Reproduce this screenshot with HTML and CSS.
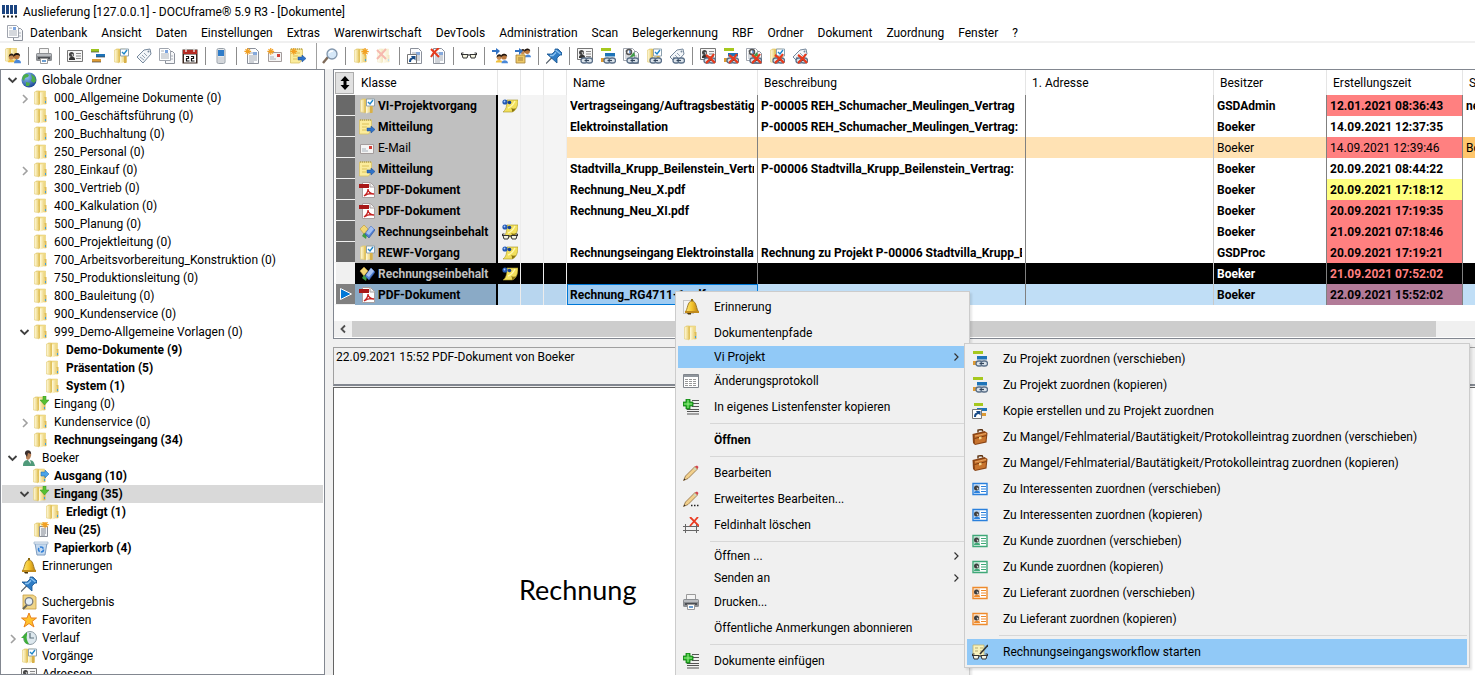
FILE: index.html
```
<!DOCTYPE html>
<html lang="de">
<head>
    <meta charset="UTF-8">
    <meta name="viewport" content="width=device-width, initial-scale=1.0">
    <title>DOCUframe - Dokumente</title>
    <link rel="stylesheet" href="styles.css">
</head>
<body>
    <!-- icon set, 16x16 -->
    <svg class="sprite" aria-hidden="true">
        <defs>
            <linearGradient id="g-fold" x1="0" x2="1" y1="0" y2="0"><stop offset="0" stop-color="#fffbe0"/><stop offset="1" stop-color="#ecd277"/></linearGradient>
            <linearGradient id="g-gold" x1="0" x2="1" y1="0" y2="0"><stop offset="0" stop-color="#fff08a"/><stop offset=".5" stop-color="#f4c42c"/><stop offset="1" stop-color="#b87a10"/></linearGradient>
            <radialGradient id="g-globe" cx="0.35" cy="0.3" r="0.8"><stop offset="0" stop-color="#8fc4f5"/><stop offset="1" stop-color="#123c8c"/></radialGradient>
        </defs>
        <symbol id="i-folder" viewBox="0 0 16 16"><path d="M3 1h9.500v7H3z" fill="#f3e08f" stroke="#e0c765" stroke-width=".5"/><path d="M1.500 2l4-1v13.500l-4-.5z" fill="url(#g-fold)" stroke="#e3cb70" stroke-width=".6"/><path d="M5.500 1.500L7 1v13l-1.500 1.500z" fill="#e2c25c"/><path d="M7 2.500l4.500-.5v12L7 15.500z" fill="url(#g-fold)"/><path d="M11.500 7h2v7l-2 .5z" fill="#e0bd55"/><path d="M12.500 11v2" stroke="#3aa0e0"/></symbol>
        <symbol id="i-vorgang" viewBox="0 0 16 16"><use href="#i-folder"/><path d="M7.500 1h8v7h-8z" fill="#fff" stroke="#8da0ae"/><path d="M9 4l2 2 3-4" fill="none" stroke="#1f86c8" stroke-width="1.400"/><path d="M11 8h2.500v7H11z" fill="#d8b048"/></symbol>
        <symbol id="i-folderin" viewBox="0 0 16 16"><use href="#i-folder" x="-1"/><path d="M10 0h3v4h3l-4.500 5L7 4h3z" fill="#55c032" stroke="#35901c" stroke-width=".5"/></symbol>
        <symbol id="i-folderout" viewBox="0 0 16 16"><use href="#i-folder" x="-1"/><path d="M8 4h4V2l4 4-4 4V8H8z" fill="#4aa3e8" stroke="#1a64ac" stroke-width=".5"/></symbol>
        <symbol id="i-spark" viewBox="0 0 16 16"><path d="M5 0v9M.5 4.500h9M2 1.500l6 6M8 1.500l-6 6" stroke="#f2a022" stroke-width="1.600"/></symbol>
        <symbol id="i-neu" viewBox="0 0 16 16"><use href="#i-folder"/><path d="M6.500 4.500h8v10h-8z" fill="#f4f6f8" stroke="#8a8f98"/><path d="M8 7h5M8 9h5M8 11h5M8 13h4" stroke="#808690"/><use href="#i-spark" x="8" y="-1" width="13" height="13"/></symbol>
        <symbol id="i-globe" viewBox="0 0 16 16"><circle cx="8" cy="8" r="7.500" fill="url(#g-globe)"/><path d="M2 4c2-3 5-2 6-1l-1 2-3 1-1 3-2-2zM10 2l4 3 1 4-2 2-3-2 1-3zM5 10l4 1-1 3-3 0z" fill="#4cae4a"/></symbol>
        <symbol id="i-person" viewBox="0 0 16 16"><path d="M2 16c0-5 2-6 6-6s5 2 6 6z" fill="#4f9a7a"/><path d="M6 9h3l1 5z" fill="#f4f4f4"/><path d="M5 2c3-2 6 0 5 4-1 4-4 5-5 2z" fill="#b98258"/><path d="M4 4c-1-5 7-5 6 0l-3-1-1 4z" fill="#3b2f2c"/></symbol>
        <symbol id="i-trash" viewBox="0 0 16 16"><path d="M2 3h12l-2 12H4z" fill="#c5d9ee" stroke="#7d9cc0"/><path d="M1 2h14v2H1z" fill="#e8f0f8" stroke="#8aa4c0" stroke-width=".6"/><circle cx="8" cy="9.500" r="2.500" fill="none" stroke="#2f7fd8" stroke-width="1.600" stroke-dasharray="4 1.200"/></symbol>
        <symbol id="i-bell" viewBox="0 0 16 16"><path d="M7 0h2v2H7z" fill="#8a6a10"/><path d="M1 13c3-2 2-11 7-11s4 9 7 11z" fill="url(#g-gold)" stroke="#8b6610" stroke-width=".8"/><path d="M1 12h14v2H1z" fill="#c08a1c"/><path d="M3 14h4v1.500H4z" fill="#4a3508"/></symbol>
        <symbol id="i-pin" viewBox="0 0 16 16"><path d="M0 15.500l6-6" stroke="#56616c" stroke-width="1.200"/><path d="M1 6h5l3-3 0-2 3 0 4 4 0 2-2 0-3 3 0 5z" fill="#2f7cc4" stroke="#15528e" stroke-width=".8"/><path d="M9.500 2l5 4M4 7.500l3 0 3-3" stroke="#8cc4f2" stroke-width="1.300" fill="none"/></symbol>
        <symbol id="i-magnifier" viewBox="0 0 16 16"><path d="M1 15l5-6" stroke="#7e6a58" stroke-width="2.400"/><circle cx="10" cy="6" r="5" fill="#d6e8f8" stroke="#8296ac" stroke-width="1.300"/><path d="M7 5c1-2 3-2 4-2" stroke="#fff" stroke-width="1.400" fill="none"/></symbol>
        <symbol id="i-search" viewBox="0 0 16 16"><path d="M2 1h10l3 2v12H2z" fill="#f0d588" stroke="#c59c40" stroke-width=".8"/><path d="M2 15l4-4" stroke="#665" stroke-width="2"/><circle cx="8" cy="7.500" r="3.800" fill="#e4eef6" stroke="#777c84" stroke-width="1.300"/></symbol>
        <symbol id="i-star" viewBox="0 0 16 16"><path d="M8 1l2 5h5.500l-4.500 3.500 2 5.500-5-3.500L3 15l2-5.500L.5 6H6z" fill="#ffc32e" stroke="#e8801c"/></symbol>
        <symbol id="i-history" viewBox="0 0 16 16"><circle cx="9" cy="8" r="6.500" fill="#dde8ee" stroke="#8d9ba4"/><path d="M9 3v5h4" stroke="#5e707c" fill="none" stroke-width="1.200"/><path d="M0 8l6-6v3c-1 3 0 6 2 9-4 0-5-2-5-6z" fill="#3fae3a"/></symbol>
        <symbol id="i-card" viewBox="0 0 16 16"><path d="M.5 2.500h15v11H.5z" fill="#f6f6f6" stroke="#777"/><path d="M9 5.500h5M9 8h5M9 10.500h5" stroke="#888"/><path d="M2 11c0-3 6-3 6 0v1H2z" fill="#333"/><circle cx="4.500" cy="6.500" r="2.500" fill="#444"/><path d="M4.500 6l2 .5-1 2z" fill="#ddd"/></symbol>
        <symbol id="i-idcard" viewBox="0 0 16 16"><path d="M1 2.500h14v11H1z" fill="#fff" stroke="currentColor" stroke-width="1.400"/><path d="M2 3.500h6v9H2z" fill="currentColor" opacity=".35"/><path d="M9 5.500h5M9 8h5M9 10.500h5" stroke="currentColor"/><path d="M2 12c0-3 6-3 6 0z" fill="currentColor"/><circle cx="4.500" cy="7" r="2.500" fill="#3c3c3c"/><path d="M4.500 6.500l2 .5-1 2z" fill="#ddd"/></symbol>
        <symbol id="i-bars" viewBox="0 0 16 16"><path d="M1 1h8v3H1z" fill="#9cc41e"/><path d="M6 6h9v3H6z" fill="#1d73b8"/><path d="M2 11h9v3H2z" fill="#dc9a34"/><path d="M1 4h8M6 9h9M2 14h9" stroke="#444" stroke-width=".7"/></symbol>
        <symbol id="i-chain" viewBox="0 0 16 16"><rect x="4" y="10" width="6.500" height="5" rx="2.500" fill="#d9e2ea" stroke="#5a6f88" stroke-width="1.300"/><rect x="9" y="10" width="6.500" height="5" rx="2.500" fill="#d9e2ea" stroke="#5a6f88" stroke-width="1.300"/><path d="M7.500 12.500h4.500" stroke="#34465c" stroke-width="1.200"/></symbol>
        <symbol id="i-cross" viewBox="0 0 16 16"><path d="M6 7c3 2 6 4 9 8M14 6c-2 3-4 6-8 9" stroke="#e63a1c" stroke-width="2.200" fill="none"/></symbol>
        <symbol id="i-barslink" viewBox="0 0 16 16"><path d="M1 0h10v3H1z" fill="#a6c81e"/><path d="M5 5h10v3.500H5z" fill="#1d73b8"/><path d="M1 10h4v4H1z" fill="#dc9a34"/><use href="#i-chain"/></symbol>
        <symbol id="i-barsx" viewBox="0 0 16 16"><use href="#i-barslink"/><use href="#i-cross"/></symbol>
        <symbol id="i-arrowbox" viewBox="0 0 16 16"><path d="M.5 6.500h9v9h-9z" fill="#fff" stroke="#777"/><path d="M2 14c0-3 1-4 3-4.500L4 8h4.500v4.500L7 11c-2 0-3 1-3 3z" fill="#174a86"/></symbol>
        <symbol id="i-barscopy" viewBox="0 0 16 16"><path d="M2 0h9v3H2z" fill="#a6c81e"/><path d="M5 5h10v3H5z" fill="#1d73b8"/><path d="M8 10h6v3H8z" fill="#dc9a34"/><use href="#i-arrowbox"/></symbol>
        <symbol id="i-doc" viewBox="0 0 16 16"><path d="M3.500.5h8l3 3v12h-11z" fill="#fbfcfe" stroke="#8b909a"/><path d="M5 5h4M5 8h8M5 10h8M5 12h8M5 14h5" stroke="#a3a9b2"/><path d="M9 4h4v3H9z" fill="#86a9dc"/></symbol>
        <symbol id="i-docs" viewBox="0 0 16 16"><path d="M6.500 3.500h7l2 2v10h-9z" fill="#f6f7f9" stroke="#8b909a"/><path d="M.5.500h9l2 2v10h-11z" fill="#fff" stroke="#a0a5ae"/><path d="M2 3h3M2 6h8M2 8h8M2 10h8M12 8h2M12 11h2" stroke="#aab0b9"/><path d="M6 2h3v3H6z" fill="#7ba4e0"/></symbol>
        <symbol id="i-docx" viewBox="0 0 16 16"><use href="#i-doc"/><path d="M1 1l8 8M9 0C6 2 3 5 1 9" stroke="#e63a1c" stroke-width="2"/></symbol>
        <symbol id="i-newdoc" viewBox="0 0 16 16"><use href="#i-doc"/><use href="#i-spark" width="12" height="12"/></symbol>
        <symbol id="i-shortcut" viewBox="0 0 16 16"><use href="#i-doc"/><use href="#i-arrowbox"/></symbol>
        <symbol id="i-doclink" viewBox="0 0 16 16"><use href="#i-docs"/><circle cx="6" cy="4" r="2.500" fill="none" stroke="#555" stroke-width="1.500"/><path d="M6 10l5-6 1 4z" fill="#3f9e44"/><use href="#i-chain"/></symbol>
        <symbol id="i-doclinkx" viewBox="0 0 16 16"><use href="#i-doclink"/><use href="#i-cross"/></symbol>
        <symbol id="i-cardlink" viewBox="0 0 16 16"><use href="#i-card" y="-2"/><use href="#i-chain"/></symbol>
        <symbol id="i-cardx" viewBox="0 0 16 16"><use href="#i-cardlink"/><use href="#i-cross"/></symbol>
        <symbol id="i-vorganglink" viewBox="0 0 16 16"><use href="#i-vorgang"/><use href="#i-chain"/></symbol>
        <symbol id="i-vorgangx" viewBox="0 0 16 16"><use href="#i-vorganglink"/><use href="#i-cross"/></symbol>
        <symbol id="i-tag" viewBox="0 0 16 16"><path d="M1 9l7-7 6-1 1 5-8 9z" fill="#f3f6f9" stroke="#76889c"/><circle cx="12.500" cy="3.500" r="1" fill="#76889c"/><path d="M4 9l4 3M6 7l3 3M8 5l3 3" stroke="#93a2b2"/></symbol>
        <symbol id="i-taglink" viewBox="0 0 16 16"><use href="#i-tag"/><use href="#i-chain"/></symbol>
        <symbol id="i-tagx" viewBox="0 0 16 16"><use href="#i-taglink"/><use href="#i-cross"/></symbol>
        <symbol id="i-print" viewBox="0 0 16 16"><path d="M3.500 .5h9v6h-9z" fill="#f4f4f4" stroke="#9a9a9a"/><rect x="0" y="5" width="16" height="8" rx="1.500" fill="#8b8e92"/><path d="M1 6h14v2H1z" fill="#b9bcc0"/><path d="M2 9h12v2H2z" fill="#4c4f54"/><path d="M4.500 10.500h7v5h-7z" fill="#fff" stroke="#9a9a9a"/><path d="M6 13h4" stroke="#3a7cc0" stroke-width="1.500"/></symbol>
        <symbol id="i-calendar" viewBox="0 0 16 16"><path d="M.5 1.500h15v14H.5z" fill="#3b2820"/><path d="M1 2h14v4H1z" fill="#b42a22"/><path d="M2 6.500h12v8H2z" fill="#fff"/><path d="M4 0v4M12 0v4" stroke="#eee" stroke-width="1.300"/><path d="M4 8.500h2.500v2h-2v2.500h3M9 8.500h2.500v2h-2v2.500h3" fill="none" stroke="#111" stroke-width="1.200"/></symbol>
        <symbol id="i-phone" viewBox="0 0 16 16"><rect x="4" y="0.500" width="8" height="15" rx="1.500" fill="#e6e9ec" stroke="#98a0a8"/><path d="M5 2h6v6H5z" fill="#2f7cc8"/><path d="M5.500 10h5M5.500 12h5M5.500 14h5" stroke="#9aa0a6" stroke-dasharray="1 1"/></symbol>
        <symbol id="i-mail" viewBox="0 0 16 16"><path d="M1.500 4.500h13v9h-13z" fill="#f4f4f4" stroke="#a39c9c"/><path d="M10 6h3v3h-3z" fill="#d24038"/><path d="M3 9h4M3 11h6" stroke="#a8b2bc"/></symbol>
        <symbol id="i-newmail" viewBox="0 0 16 16"><use href="#i-mail"/><use href="#i-spark" width="12" height="12"/></symbol>
        <symbol id="i-note" viewBox="0 0 16 16"><path d="M.5 1h12v10l-3 4h-9z" fill="#fbec9c" stroke="#d9c264" stroke-width=".8"/><path d="M1 1h11" stroke="#9c8a3a" stroke-dasharray="1 1"/><path d="M3 5h7M3 8h5M3 11h4" stroke="#dcc25a"/><path d="M8 9h4V7l4 3.500L12 14v-2H8z" fill="#2f72c8" stroke="#164a90" stroke-width=".5"/></symbol>
        <symbol id="i-newnote" viewBox="0 0 16 16"><use href="#i-note"/><use href="#i-spark" width="12" height="12"/></symbol>
        <symbol id="i-newfolder" viewBox="0 0 16 16"><use href="#i-folder"/><use href="#i-spark" x="8" y="0" width="13" height="13"/></symbol>
        <symbol id="i-folderx" viewBox="0 0 16 16"><g opacity=".35"><use href="#i-folder"/><path d="M1 2l9 9M10 1L1 11" stroke="#e63a1c" stroke-width="2"/></g></symbol>
        <symbol id="i-glasses" viewBox="0 0 16 16"><path d="M.5 7V5h2M15.500 7V5h-2M7 7h2" stroke="#333" fill="none"/><path d="M1 6.500h6L6 10H2zM9 6.500h6L14 10h-4z" fill="#f6f6e4" stroke="#333"/></symbol>
        <symbol id="i-heads" viewBox="0 0 16 16"><circle cx="5" cy="8" r="3" fill="#c68a52"/><path d="M2 8c0-5 6-5 6-1-2-1-4-1-6 1z" fill="#2c2018"/><circle cx="11" cy="7" r="3.500" fill="#b9773e"/><path d="M7 8c0-6 8-6 8-1-2-2-5-2-8 1z" fill="#1e1612"/><path d="M1 14c0-4 8-4 8 0z" fill="#efbf3c"/><path d="M8 15c0-5 8-5 8 0z" fill="#4a88d8"/></symbol>
        <symbol id="i-users1" viewBox="0 0 16 16"><use href="#i-heads" x="3" y="3" width="13" height="13"/><path d="M0 2h4V0l4 3-4 4V4H0z" fill="#3273c4"/></symbol>
        <symbol id="i-users2" viewBox="0 0 16 16"><use href="#i-heads" x="4" y="-2" width="12" height="12"/><path d="M1 7h9v8H1z" fill="#edc968" stroke="#a5803a" stroke-width=".8"/><path d="M3 10h5M3 12h5" stroke="#a5803a"/><path d="M0 2h4V0l4 3-4 4V4H0z" fill="#3273c4"/></symbol>
        <symbol id="i-userfolder" viewBox="0 0 16 16"><use href="#i-folder" x="-1" y="-1"/><use href="#i-heads" x="2" y="2" width="14" height="14"/></symbol>
        <symbol id="i-pdf" viewBox="0 0 16 16"><path d="M3.500.5h8l4 4v11h-12z" fill="#fff" stroke="#a8a0a0"/><path d="M11 1v4h4" fill="#eee" stroke="#a8a0a0"/><path d="M0 2h10v4H0z" fill="#a81818"/><path d="M5 14c4-3 4-5 4-7 0 3 3 5 6 5-4-1-7 0-10 2z" fill="none" stroke="#c42222" stroke-width="1.300"/></symbol>
        <symbol id="i-cubes" viewBox="0 0 16 16"><path d="M5 1l4 4-4 5-4-5z" fill="#f2d774" stroke="#b8953a" stroke-width=".6"/><path d="M5 9l3 2-1 4-4-3z" fill="#3c9c44"/><path d="M12 2l4 4-6 8-4-4z" fill="#4f7fd4" stroke="#2a4d94" stroke-width=".6"/><path d="M12 2l3 3-5 6-3-2z" fill="#a3c0f2"/></symbol>
        <symbol id="i-postit" viewBox="0 0 16 16"><path d="M5 2h11c0 6-2 11-6 12H1c3-2 4-6 4-12z" fill="#f2e05c" stroke="#a39024" stroke-width=".6"/><path d="M10 14c0-2 0-3-1-4 2 1 4 1 5 0-1 2-2 3-4 4z" fill="#8a7612"/><path d="M6 10c3-1 5-3 7-7" stroke="#fff8b0" stroke-width="1.400" fill="none"/><circle cx="3" cy="4" r="2.600" fill="#2459b4"/><circle cx="7.500" cy="4.500" r="1.800" fill="#173f8c"/><circle cx="2.500" cy="3.500" r=".9" fill="#a8ccff"/></symbol>
        <symbol id="i-postit2" viewBox="0 0 16 16"><use href="#i-postit" y="-1"/><use href="#i-glasses" y="5"/></symbol>
        <symbol id="i-remind" viewBox="0 0 16 16"><path d="M.5 1.500h10v13H.5z" fill="#f4f4f4" stroke="#999" stroke-dasharray="1 1"/><use href="#i-bell" x="1"/></symbol>
        <symbol id="i-window" viewBox="0 0 16 16"><path d="M.5 1.500h15v13H.5z" fill="#fff" stroke="#80858c"/><path d="M1 2h14v2H1z" fill="#8f959c"/><path d="M2 6.500h12M2 8.500h12M2 10.500h12M2 12.500h12" stroke="#999" stroke-dasharray="3 1"/></symbol>
        <symbol id="i-listadd" viewBox="0 0 16 16"><path d="M9 1.500h7M9 4.500h7M9 7.500h7M4 10.500h12M4 12.500h12M4 15h12" stroke="#555"/><path d="M3 0h4v3h3v4H7v3H3V7H0V3h3z" fill="#28b428" stroke="#0f7a12" stroke-width=".8"/><path d="M5 1v8M1 5h8" stroke="#98ec86"/></symbol>
        <symbol id="i-pencil" viewBox="0 0 16 16"><path d="M.5 15.500l2-4.500L12 1.500l2.500 2.500L5 13.500z" fill="#f2d08c" stroke="#8a6a3c" stroke-width=".8"/><path d="M12 1.500l2-1 1.500 1.500-1 2z" fill="#d4404c"/><path d="M11 3l2 2" stroke="#c8d8c8" stroke-width="1.400"/><path d="M.5 15.500l1-2 1 1z" fill="#222"/></symbol>
        <symbol id="i-pencil2" viewBox="0 0 16 16"><use href="#i-pencil"/><path d="M8 14.500h1.500M11 14.500h1.500M14 14.500h1.500" stroke="#222" stroke-width="1.400"/></symbol>
        <symbol id="i-fielddel" viewBox="0 0 16 16"><path d="M0 9.500h16M0 13.500h16M2.500 7v9M13.500 7v9" stroke="#666"/><path d="M7 0l9 9M15 0L7 9" stroke="#ea3a20" stroke-width="1.800"/></symbol>
        <symbol id="i-case" viewBox="0 0 16 16"><path d="M6 3.500V1l4-.5 1 2" fill="none" stroke="#5c3210" stroke-width="1.400"/><path d="M.5 5l12-3 3 2-1 9.500L3 16l-2-2z" fill="#8a4516"/><path d="M2.500 6l12-2.500-1 9L3 15z" fill="#c8742e"/><path d="M2.500 9.500l12-3" stroke="#7c3c10"/><path d="M3 7l11-2.500" stroke="#e8a460"/><path d="M7 8l2.500-.5v2.500L7 10.500z" fill="#f4d48a"/></symbol>
        <symbol id="i-workflow" viewBox="0 0 16 16"><path d="M1 1h11v11H1z" fill="#f8f2bc" stroke="#c0b470" stroke-width=".8"/><path d="M3 4h3M8 4h3M3 7h3M8 7h2" stroke="#b4aa70"/><path d="M16 1L8 10" stroke="#333" stroke-width="1.600"/><use href="#i-glasses" y="5"/></symbol>
        <symbol id="i-open" viewBox="0 0 16 16"><path d="M4.500 6L8.500 10l4-4" fill="none" stroke="#404040" stroke-width="1.800"/></symbol>
        <symbol id="i-closed" viewBox="0 0 16 16"><path d="M7 5l4 4-4 4" fill="none" stroke="#a0a0a0" stroke-width="1.600"/></symbol>
        <symbol id="i-more" viewBox="0 0 16 16"><path d="M6.500 4.500L10 8l-3.500 3.500" fill="none" stroke="#333" stroke-width="1.200"/></symbol>
    </svg>

    <div class="titlebar">
        <svg class="icon" viewBox="0 0 16 16"><path d="M0 1h3v9H0zM4 1h3v9H4zM8 1h3v9H8zM12 1h3v9h-3z" fill="#1b4480"/><path d="M1 12.500h15" stroke="#222" stroke-width="2" stroke-dasharray="2 2"/></svg>
        <span>Auslieferung [127.0.0.1] - DOCUframe® 5.9 R3 - [Dokumente]</span>
    </div>

    <nav class="menubar">
        <svg class="icon"><use href="#i-docs"/></svg>
        <button>Datenbank</button>
        <button>Ansicht</button>
        <button>Daten</button>
        <button>Einstellungen</button>
        <button>Extras</button>
        <button>Warenwirtschaft</button>
        <button>DevTools</button>
        <button>Administration</button>
        <button>Scan</button>
        <button>Belegerkennung</button>
        <button>RBF</button>
        <button>Ordner</button>
        <button>Dokument</button>
        <button>Zuordnung</button>
        <button>Fenster</button>
        <button>?</button>
    </nav>

    <div class="toolbar">
        <div class="tools">
            <button aria-label="Benutzer"><svg class="icon"><use href="#i-userfolder"/></svg></button>
            <i class="sep"></i>
            <button aria-label="Drucken"><svg class="icon"><use href="#i-print"/></svg></button>
            <i class="sep"></i>
            <button aria-label="Adressen"><svg class="icon"><use href="#i-card"/></svg></button>
            <button aria-label="Projekte"><svg class="icon"><use href="#i-bars"/></svg></button>
            <button aria-label="Vorgänge"><svg class="icon"><use href="#i-vorgang"/></svg></button>
            <button aria-label="Artikel"><svg class="icon"><use href="#i-tag"/></svg></button>
            <button aria-label="Dokumente"><svg class="icon"><use href="#i-docs"/></svg></button>
            <button aria-label="Kalender"><svg class="icon"><use href="#i-calendar"/></svg></button>
            <i class="sep"></i>
            <button aria-label="Telefon"><svg class="icon"><use href="#i-phone"/></svg></button>
            <i class="sep"></i>
            <button aria-label="Neues Dokument"><svg class="icon"><use href="#i-newdoc"/></svg></button>
            <button aria-label="Neue E-Mail"><svg class="icon"><use href="#i-newmail"/></svg></button>
            <button aria-label="Neue Mitteilung"><svg class="icon"><use href="#i-newnote"/></svg></button>
        </div>
        <div class="tools">
            <button aria-label="Suchen"><svg class="icon"><use href="#i-magnifier"/></svg></button>
            <i class="sep"></i>
            <button aria-label="Neuer Ordner"><svg class="icon"><use href="#i-newfolder"/></svg></button>
            <button aria-label="Ordner löschen" disabled><svg class="icon"><use href="#i-folderx"/></svg></button>
            <i class="sep"></i>
            <button aria-label="Verknüpfung"><svg class="icon"><use href="#i-shortcut"/></svg></button>
            <button aria-label="Dokument löschen"><svg class="icon"><use href="#i-docx"/></svg></button>
            <i class="sep"></i>
            <button aria-label="Gelesen"><svg class="icon"><use href="#i-glasses"/></svg></button>
            <i class="sep"></i>
            <button aria-label="Weiterleiten"><svg class="icon"><use href="#i-users1"/></svg></button>
            <button aria-label="Verteilen"><svg class="icon"><use href="#i-users2"/></svg></button>
            <i class="sep"></i>
            <button aria-label="Anheften"><svg class="icon"><use href="#i-pin"/></svg></button>
            <i class="sep"></i>
            <button aria-label="Adresse zuordnen"><svg class="icon"><use href="#i-cardlink"/></svg></button>
            <button aria-label="Projekt zuordnen"><svg class="icon"><use href="#i-barslink"/></svg></button>
            <button aria-label="Dokument zuordnen"><svg class="icon"><use href="#i-doclink"/></svg></button>
            <button aria-label="Vorgang zuordnen"><svg class="icon"><use href="#i-vorganglink"/></svg></button>
            <button aria-label="Artikel zuordnen"><svg class="icon"><use href="#i-taglink"/></svg></button>
            <i class="sep"></i>
            <button aria-label="Adresse lösen"><svg class="icon"><use href="#i-cardx"/></svg></button>
            <button aria-label="Projekt lösen"><svg class="icon"><use href="#i-barsx"/></svg></button>
            <button aria-label="Dokument lösen"><svg class="icon"><use href="#i-doclinkx"/></svg></button>
            <button aria-label="Vorgang lösen"><svg class="icon"><use href="#i-vorgangx"/></svg></button>
            <button aria-label="Artikel lösen"><svg class="icon"><use href="#i-tagx"/></svg></button>
        </div>
    </div>

    <div class="main">
        <!-- folder tree -->
        <aside class="tree">
            <a href="#" class="row"><svg class="icon"><use href="#i-open"/></svg><svg class="icon"><use href="#i-globe"/></svg>Globale Ordner</a>
            <a href="#" class="row l1"><svg class="icon"><use href="#i-closed"/></svg><svg class="icon"><use href="#i-folder"/></svg>000_Allgemeine Dokumente (0)</a>
            <a href="#" class="row l1"><i class="icon"></i><svg class="icon"><use href="#i-folder"/></svg>100_Geschäftsführung (0)</a>
            <a href="#" class="row l1"><i class="icon"></i><svg class="icon"><use href="#i-folder"/></svg>200_Buchhaltung (0)</a>
            <a href="#" class="row l1"><i class="icon"></i><svg class="icon"><use href="#i-folder"/></svg>250_Personal (0)</a>
            <a href="#" class="row l1"><svg class="icon"><use href="#i-closed"/></svg><svg class="icon"><use href="#i-folder"/></svg>280_Einkauf (0)</a>
            <a href="#" class="row l1"><i class="icon"></i><svg class="icon"><use href="#i-folder"/></svg>300_Vertrieb (0)</a>
            <a href="#" class="row l1"><i class="icon"></i><svg class="icon"><use href="#i-folder"/></svg>400_Kalkulation (0)</a>
            <a href="#" class="row l1"><i class="icon"></i><svg class="icon"><use href="#i-folder"/></svg>500_Planung (0)</a>
            <a href="#" class="row l1"><i class="icon"></i><svg class="icon"><use href="#i-folder"/></svg>600_Projektleitung (0)</a>
            <a href="#" class="row l1"><i class="icon"></i><svg class="icon"><use href="#i-folder"/></svg>700_Arbeitsvorbereitung_Konstruktion (0)</a>
            <a href="#" class="row l1"><i class="icon"></i><svg class="icon"><use href="#i-folder"/></svg>750_Produktionsleitung (0)</a>
            <a href="#" class="row l1"><i class="icon"></i><svg class="icon"><use href="#i-folder"/></svg>800_Bauleitung (0)</a>
            <a href="#" class="row l1"><i class="icon"></i><svg class="icon"><use href="#i-folder"/></svg>900_Kundenservice (0)</a>
            <a href="#" class="row l1"><svg class="icon"><use href="#i-open"/></svg><svg class="icon"><use href="#i-folder"/></svg>999_Demo-Allgemeine Vorlagen (0)</a>
            <a href="#" class="row l2 bold"><i class="icon"></i><svg class="icon"><use href="#i-folder"/></svg>Demo-Dokumente (9)</a>
            <a href="#" class="row l2 bold"><i class="icon"></i><svg class="icon"><use href="#i-folder"/></svg>Präsentation (5)</a>
            <a href="#" class="row l2 bold"><i class="icon"></i><svg class="icon"><use href="#i-folder"/></svg>System (1)</a>
            <a href="#" class="row l1"><i class="icon"></i><svg class="icon"><use href="#i-folderin"/></svg>Eingang (0)</a>
            <a href="#" class="row l1"><svg class="icon"><use href="#i-closed"/></svg><svg class="icon"><use href="#i-folder"/></svg>Kundenservice (0)</a>
            <a href="#" class="row l1 bold"><i class="icon"></i><svg class="icon"><use href="#i-folder"/></svg>Rechnungseingang (34)</a>
            <a href="#" class="row"><svg class="icon"><use href="#i-open"/></svg><svg class="icon"><use href="#i-person"/></svg>Boeker</a>
            <a href="#" class="row l1 bold"><i class="icon"></i><svg class="icon"><use href="#i-folderout"/></svg>Ausgang (10)</a>
            <a href="#" class="row l1 bold selected"><svg class="icon"><use href="#i-open"/></svg><svg class="icon"><use href="#i-folderin"/></svg>Eingang (35)</a>
            <a href="#" class="row l2 bold"><i class="icon"></i><svg class="icon"><use href="#i-folder"/></svg>Erledigt (1)</a>
            <a href="#" class="row l1 bold"><i class="icon"></i><svg class="icon"><use href="#i-neu"/></svg>Neu (25)</a>
            <a href="#" class="row l1 bold"><i class="icon"></i><svg class="icon"><use href="#i-trash"/></svg>Papierkorb (4)</a>
            <a href="#" class="row"><i class="icon"></i><svg class="icon"><use href="#i-bell"/></svg>Erinnerungen</a>
            <a href="#" class="row" aria-label="Angeheftet"><i class="icon"></i><svg class="icon"><use href="#i-pin"/></svg></a>
            <a href="#" class="row"><i class="icon"></i><svg class="icon"><use href="#i-search"/></svg>Suchergebnis</a>
            <a href="#" class="row"><i class="icon"></i><svg class="icon"><use href="#i-star"/></svg>Favoriten</a>
            <a href="#" class="row"><svg class="icon"><use href="#i-closed"/></svg><svg class="icon"><use href="#i-history"/></svg>Verlauf</a>
            <a href="#" class="row"><i class="icon"></i><svg class="icon"><use href="#i-vorgang"/></svg>Vorgänge</a>
            <a href="#" class="row"><i class="icon"></i><svg class="icon"><use href="#i-card"/></svg>Adressen</a>
        </aside>

        <div class="content">
            <div class="list">
                <table>
                    <colgroup>
                        <col class="c-sel"><col class="c-class"><col class="c-flag"><col class="c-flag"><col class="c-flag">
                        <col class="c-name"><col class="c-desc"><col class="c-addr"><col class="c-owner"><col class="c-time"><col>
                    </colgroup>
                    <thead>
                        <tr>
                            <th class="sel"><button aria-label="Sortieren"><svg class="icon" viewBox="0 0 16 16"><path d="M8 1l4.500 5H9.500v4h3L8 15l-4.500-5h3V6h-3z"/></svg></button></th>
                            <th>Klasse</th><th></th><th></th><th></th><th>Name</th><th>Beschreibung</th><th>1. Adresse</th><th>Besitzer</th><th>Erstellungszeit</th><th>S</th>
                        </tr>
                    </thead>
                    <tbody>
                        <tr class="bold">
                            <td class="sel"></td>
                            <td class="class"><div><svg class="icon"><use href="#i-vorgang"/></svg>VI-Projektvorgang</div></td>
                            <td class="flag"><svg class="icon"><use href="#i-postit"/></svg></td><td class="flag"></td><td class="flag"></td>
                            <td><div>Vertragseingang/Auftragsbestätigung</div></td>
                            <td><div>P-00005 REH_Schumacher_Meulingen_Vertrag</div></td>
                            <td class="light"></td><td>GSDAdmin</td>
                            <td class="red">12.01.2021 08:36:43</td><td>ne</td>
                        </tr>
                        <tr class="bold">
                            <td class="sel"></td>
                            <td class="class"><div><svg class="icon"><use href="#i-note"/></svg>Mitteilung</div></td>
                            <td class="flag"></td><td class="flag"></td><td class="flag"></td>
                            <td><div>Elektroinstallation</div></td>
                            <td><div>P-00005 REH_Schumacher_Meulingen_Vertrag:</div></td>
                            <td class="light"></td><td>Boeker</td>
                            <td>14.09.2021 12:37:35</td><td></td>
                        </tr>
                        <tr class="mail">
                            <td class="sel"></td>
                            <td class="class"><div><svg class="icon"><use href="#i-mail"/></svg>E-Mail</div></td>
                            <td class="flag"></td><td class="flag"></td><td class="flag"></td>
                            <td></td>
                            <td></td>
                            <td class="light"></td><td>Boeker</td>
                            <td class="red">14.09.2021 12:39:46</td><td class="orange">Bo</td>
                        </tr>
                        <tr class="bold">
                            <td class="sel"></td>
                            <td class="class"><div><svg class="icon"><use href="#i-note"/></svg>Mitteilung</div></td>
                            <td class="flag"></td><td class="flag"></td><td class="flag"></td>
                            <td><div>Stadtvilla_Krupp_Beilenstein_Vertrag</div></td>
                            <td><div>P-00006 Stadtvilla_Krupp_Beilenstein_Vertrag:</div></td>
                            <td class="light"></td><td>Boeker</td>
                            <td>20.09.2021 08:44:22</td><td></td>
                        </tr>
                        <tr class="bold">
                            <td class="sel"></td>
                            <td class="class"><div><svg class="icon"><use href="#i-pdf"/></svg>PDF-Dokument</div></td>
                            <td class="flag"></td><td class="flag"></td><td class="flag"></td>
                            <td><div>Rechnung_Neu_X.pdf</div></td>
                            <td></td>
                            <td class="light"></td><td>Boeker</td>
                            <td class="yellow">20.09.2021 17:18:12</td><td></td>
                        </tr>
                        <tr class="bold">
                            <td class="sel"></td>
                            <td class="class"><div><svg class="icon"><use href="#i-pdf"/></svg>PDF-Dokument</div></td>
                            <td class="flag"></td><td class="flag"></td><td class="flag"></td>
                            <td><div>Rechnung_Neu_XI.pdf</div></td>
                            <td></td>
                            <td class="light"></td><td>Boeker</td>
                            <td class="red">20.09.2021 17:19:35</td><td></td>
                        </tr>
                        <tr class="bold">
                            <td class="sel"></td>
                            <td class="class"><div><svg class="icon"><use href="#i-cubes"/></svg>Rechnungseinbehalt</div></td>
                            <td class="flag"><svg class="icon"><use href="#i-postit2"/></svg></td><td class="flag"></td><td class="flag"></td>
                            <td></td>
                            <td></td>
                            <td class="light"></td><td>Boeker</td>
                            <td class="red">21.09.2021 07:18:46</td><td></td>
                        </tr>
                        <tr class="bold">
                            <td class="sel"></td>
                            <td class="class"><div><svg class="icon"><use href="#i-vorgang"/></svg>REWF-Vorgang</div></td>
                            <td class="flag"><svg class="icon"><use href="#i-postit"/></svg></td><td class="flag"></td><td class="flag"></td>
                            <td><div>Rechnungseingang Elektroinstallation</div></td>
                            <td><div>Rechnung zu Projekt P-00006 Stadtvilla_Krupp_Beilenstein</div></td>
                            <td class="light"></td><td>GSDProc</td>
                            <td class="red">20.09.2021 17:19:21</td><td></td>
                        </tr>
                        <tr class="bold dark">
                            <td class="sel"></td>
                            <td class="class"><div><svg class="icon"><use href="#i-cubes"/></svg>Rechnungseinbehalt</div></td>
                            <td class="flag"><svg class="icon"><use href="#i-postit"/></svg></td><td class="flag"></td><td class="flag"></td>
                            <td></td>
                            <td></td>
                            <td class="light"></td><td>Boeker</td>
                            <td class="red">21.09.2021 07:52:02</td><td></td>
                        </tr>
                        <tr class="bold current">
                            <td class="sel"><svg class="icon" viewBox="0 0 16 16"><path d="M2.500 2.500l11 5.500-11 5.500z" fill="#0078d7" stroke="#fff"/></svg></td>
                            <td class="class"><div><svg class="icon"><use href="#i-pdf"/></svg>PDF-Dokument</div></td>
                            <td class="flag"></td><td class="flag"></td><td class="flag"></td>
                            <td class="focus"><div>Rechnung_RG4711-1.pdf</div></td>
                            <td></td>
                            <td class="light"></td><td>Boeker</td>
                            <td class="red">22.09.2021 15:52:02</td><td></td>
                        </tr>
                    </tbody>
                </table>
                <div class="scroll">
                    <button aria-label="Nach links"><svg class="icon" viewBox="0 0 16 16"><path d="M11 4.500L7.500 8l3.500 3.500" fill="none" stroke="#505050" stroke-width="1.800"/></svg></button>
                    <div class="thumb"></div>
                </div>
            </div>

            <div class="info">22.09.2021 15:52 PDF-Dokument von Boeker</div>
            <div class="preview">Rechnung</div>
        </div>
    </div>

    <!-- context menu of the selected document -->
    <div class="popup context" role="menu">
        <button class="big"><svg class="icon"><use href="#i-remind"/></svg>Erinnerung</button>
        <button class="big"><svg class="icon"><use href="#i-folder"/></svg>Dokumentenpfade</button>
        <button class="active"><i class="icon"></i>Vi Projekt<svg class="icon more"><use href="#i-more"/></svg></button>
        <button class="big"><svg class="icon"><use href="#i-window"/></svg>Änderungsprotokoll</button>
        <button class="big"><svg class="icon"><use href="#i-listadd"/></svg>In eigenes Listenfenster kopieren</button>
        <hr>
        <button class="big bold"><i class="icon"></i>Öffnen</button>
        <hr>
        <button class="big"><svg class="icon"><use href="#i-pencil"/></svg>Bearbeiten</button>
        <button class="big"><svg class="icon"><use href="#i-pencil2"/></svg>Erweitertes Bearbeiten...</button>
        <button class="big"><svg class="icon"><use href="#i-fielddel"/></svg>Feldinhalt löschen</button>
        <hr>
        <button><i class="icon"></i>Öffnen ...<svg class="icon more"><use href="#i-more"/></svg></button>
        <button><i class="icon"></i>Senden an<svg class="icon more"><use href="#i-more"/></svg></button>
        <button class="big"><svg class="icon"><use href="#i-print"/></svg>Drucken...</button>
        <button class="big"><i class="icon"></i>Öffentliche Anmerkungen abonnieren</button>
        <hr>
        <button class="big"><svg class="icon"><use href="#i-listadd"/></svg>Dokumente einfügen</button>
    </div>

    <div class="popup submenu" role="menu">
        <button class="big"><svg class="icon"><use href="#i-barslink"/></svg>Zu Projekt zuordnen (verschieben)</button>
        <button class="big"><svg class="icon"><use href="#i-barslink"/></svg>Zu Projekt zuordnen (kopieren)</button>
        <button class="big"><svg class="icon"><use href="#i-barscopy"/></svg>Kopie erstellen und zu Projekt zuordnen</button>
        <button class="big"><svg class="icon"><use href="#i-case"/></svg>Zu Mangel/Fehlmaterial/Bautätigkeit/Protokolleintrag zuordnen (verschieben)</button>
        <button class="big"><svg class="icon"><use href="#i-case"/></svg>Zu Mangel/Fehlmaterial/Bautätigkeit/Protokolleintrag zuordnen (kopieren)</button>
        <button class="big"><svg class="icon blue"><use href="#i-idcard"/></svg>Zu Interessenten zuordnen (verschieben)</button>
        <button class="big"><svg class="icon blue"><use href="#i-idcard"/></svg>Zu Interessenten zuordnen (kopieren)</button>
        <button class="big"><svg class="icon green"><use href="#i-idcard"/></svg>Zu Kunde zuordnen (verschieben)</button>
        <button class="big"><svg class="icon green"><use href="#i-idcard"/></svg>Zu Kunde zuordnen (kopieren)</button>
        <button class="big"><svg class="icon amber"><use href="#i-idcard"/></svg>Zu Lieferant zuordnen (verschieben)</button>
        <button class="big"><svg class="icon amber"><use href="#i-idcard"/></svg>Zu Lieferant zuordnen (kopieren)</button>
        <hr>
        <button class="big active"><svg class="icon"><use href="#i-workflow"/></svg>Rechnungseingangsworkflow starten</button>
    </div>
</body>
</html>
```
FILE: styles.css
```
* {
    box-sizing: border-box;
}

body {
    margin: 0;
    height: 100vh;
    display: flex;
    flex-direction: column;
    overflow: hidden;
    position: relative;
    background: #f0f0f0;
    color: #000;
    font-family: Roboto, "Open Sans", sans-serif;
    font-size: 12px;
    line-height: 16px;
    white-space: nowrap;
}

button {
    font: inherit;
    color: inherit;
    background: none;
    border: none;
    padding: 0;
    text-align: left;
}

.sprite {
    position: absolute;
    width: 0;
    height: 0;
}

.icon {
    width: 16px;
    height: 16px;
    flex: none;
}

.bold {
    font-weight: bold;
}

/* Window title and menu */
.titlebar {
    display: flex;
    align-items: center;
    gap: 5px;
    height: 24px;
    padding-left: 2px;
    background: #fff;
}

.menubar {
    display: flex;
    align-items: center;
    gap: 14px;
    height: 19px;
    padding-left: 7px;
    background: #fff;
    border-bottom: 2px solid #f0f0f0;
}

.menubar .icon {
    margin-right: -7px;
}

/* Toolbar */
.toolbar {
    display: flex;
    height: 26px;
    background: #fff;
}

.tools {
    display: flex;
    align-items: center;
    padding: 0 7px 0 1px;
}

.tools + .tools {
    border-left: 1px solid #a0a0a0;
}

.tools button {
    display: flex;
    justify-content: center;
    width: 23px;
}

.sep {
    width: 1px;
    height: 18px;
    margin: 0 3px 0 4px;
    background: #8c8c8c;
}

.main {
    flex: 1;
    min-height: 0;
    display: flex;
    gap: 8px;
}

/* Folder tree */
.tree {
    flex: none;
    width: 325px;
    padding: 1px;
    overflow: hidden;
    background: #fff;
    border: 1px solid #828790;
}

.row {
    display: flex;
    align-items: center;
    height: 18px;
    padding-left: 2px;
    color: #000;
    text-decoration: none;
}

.row .icon + .icon {
    margin: 0 5px 0 1px;
}

.l1 {
    padding-left: 14px;
}

.l2 {
    padding-left: 26px;
}

.selected {
    background: #d9d9d9;
}

/* Document list */
.content {
    flex: 1;
    min-width: 0;
    display: flex;
    flex-direction: column;
}

.list {
    background: #fff;
    border: 1px solid #828790;
    border-right: none;
    overflow: hidden;
}

table {
    width: 100%;
    table-layout: fixed;
    border-collapse: separate;
    border-spacing: 0;
}

.c-sel { width: 21px; }
.c-class { width: 143px; }
.c-flag { width: 23px; }
.c-name { width: 191px; }
.c-desc { width: 268px; }
.c-addr { width: 188px; }
.c-owner { width: 113px; }
.c-time { width: 136px; }

th {
    height: 25px;
    padding: 0 0 0 6px;
    border-right: 1px solid #e5e5e5;
    font-weight: normal;
    text-align: left;
}

th.sel {
    padding: 1px;
    border: none;
}

th button {
    display: flex;
    align-items: center;
    justify-content: center;
    width: 100%;
    height: 22px;
    background: #e1e1e1;
    border: 1px solid #adadad;
}

td {
    height: 21px;
    padding: 0 3px;
    overflow: hidden;
    border-right: 1px solid #808080;
}

td div {
    overflow: hidden;
}

td:last-child, th:last-child {
    border-right: none;
}

td.light {
    border-right-color: #c8c8c8;
}

td.sel {
    padding: 0 2px;
    background: #696969;
    border-left: 2px solid #fff;
    border-right: none;
    border-bottom: 1px solid #f0f0f0;
}

td.class {
    padding: 0 0 0 4px;
    background: #c0c0c0;
    border-right: 2px solid #000;
}

td.class div {
    display: flex;
    align-items: center;
    gap: 3px;
}

td.flag {
    padding: 0 4px;
    background: #f4f4f4;
    border-right-color: #ececec;
}

td .icon {
    display: block;
}

.mail td {
    background-color: #ffe2b4;
}

.mail td.sel { background-color: #696969; }
.mail td.class { background-color: #c0c0c0; }
.mail td.flag { background-color: #f4f4f4; }
.mail td.orange { background-color: #ffc66c; }

td.red, .mail td.red {
    background: #ff8080;
}

td.yellow {
    background: #ffff80;
}

.dark td {
    background: #000;
    color: #fff;
}

.dark td.sel { background: #f0f0f0; }
.dark td.class { color: #c0c0c0; }
.dark td.red { color: #ff8080; }

.current td {
    background: #c0def6;
}

.current td.sel { background: #808080; }
.current td.class { background: #8aaac6; }
.current td.flag { background: #b8d6ef; }
.current td.red { background: #b27b98; }

.current td.focus {
    background: #a0ccf2;
    padding: 0 2px;
    border: 1px solid #0078d7;
}

.scroll {
    display: flex;
    height: 16px;
    margin: 16px 0 1px;
    background: #f0f0f0;
}

.scroll button {
    width: 18px;
}

.thumb {
    flex: none;
    width: 95%;
    background: #cdcdcd;
}

/* Preview */
.info {
    height: 39px;
    margin-top: 8px;
    padding: 1px 2px;
    border: 1px solid #a0a0a0;
    border-right: none;
    border-bottom: 2px solid #828790;
}

.preview {
    flex: 1;
    margin-top: 1px;
    padding: 184px 0 0 185px;
    background: #fff;
    border: 1px solid #646464;
    border-width: 1px 0 0 1px;
    font-family: Lato, sans-serif;
    font-size: 27px;
    line-height: 36px;
}

/* Popup menus */
.popup {
    position: absolute;
    padding: 2px;
    background: #f0f0f0;
    border: 1px solid #ccc;
    box-shadow: 2px 2px 2px rgba(0, 0, 0, 0.1);
}

.popup button {
    display: flex;
    align-items: center;
    gap: 15px;
    width: 100%;
    height: 22px;
    padding-left: 5px;
}

.popup .big {
    height: 26px;
}

.popup .active {
    background: #91c9f7;
}

.popup .more {
    margin: 0 3px 0 auto;
}

.popup hr {
    height: 1px;
    margin: 3px 0 3px 32px;
    border: none;
    background: #d7d7d7;
}

.context {
    left: 675px;
    top: 291px;
    width: 295px;
}

.submenu {
    left: 964px;
    top: 343px;
    width: 506px;
}

.submenu button {
    width: 500px;
}

.blue { color: #2a80dc; }
.green { color: #3fa878; }
.amber { color: #ee8a2c; }
```
